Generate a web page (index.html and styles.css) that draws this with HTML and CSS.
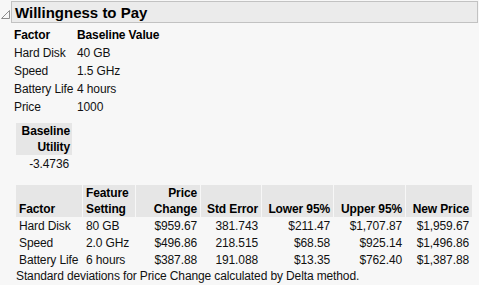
FILE: index.html
```html
<!DOCTYPE html>
<html>
<head>
<meta charset="utf-8">
<link rel="stylesheet" href="styles.css">
</head>
<body>
<div class="report">
  <div class="outline-head">
    <svg class="disclosure" width="9" height="9" viewBox="0 0 9 9"><path d="M8.5 0.5 L8.5 8.5 L0.5 8.5 Z" fill="#f7f7f7" stroke="#8c8c8c" stroke-width="1"/></svg>
    <div class="title-bar">Willingness to Pay</div>
  </div>
  <div class="content">
    <table class="baseline">
      <thead><tr><th class="c1">Factor</th><th>Baseline Value</th></tr></thead>
      <tbody>
        <tr><td class="c1">Hard Disk</td><td>40 GB</td></tr>
        <tr><td class="c1">Speed</td><td>1.5 GHz</td></tr>
        <tr><td class="c1">Battery Life</td><td>4 hours</td></tr>
        <tr><td class="c1">Price</td><td>1000</td></tr>
      </tbody>
    </table>
    <table class="utility">
      <thead><tr><th>Baseline<br>Utility</th></tr></thead>
      <tbody><tr><td>-3.4736</td></tr></tbody>
    </table>
    <table class="wtp">
      <thead>
        <tr>
          <th class="l w1">Factor</th>
          <th class="l w2">Feature<br>Setting</th>
          <th class="w3">Price<br>Change</th>
          <th class="w4">Std Error</th>
          <th class="w5">Lower 95%</th>
          <th class="w6">Upper 95%</th>
          <th class="w7">New Price</th>
        </tr>
      </thead>
      <tbody>
        <tr><td class="l">Hard Disk</td><td class="l">80 GB</td><td>$959.67</td><td>381.743</td><td>$211.47</td><td>$1,707.87</td><td>$1,959.67</td></tr>
        <tr><td class="l">Speed</td><td class="l">2.0 GHz</td><td>$496.86</td><td>218.515</td><td>$68.58</td><td>$925.14</td><td>$1,496.86</td></tr>
        <tr><td class="l">Battery Life</td><td class="l">6 hours</td><td>$387.88</td><td>191.088</td><td>$13.35</td><td>$762.40</td><td>$1,387.88</td></tr>
      </tbody>
    </table>
    <div class="note">Standard deviations for Price Change calculated by Delta method.</div>
  </div>
</div>
</body>
</html>
```
FILE: styles.css
```css
html, body {
  margin: 0;
  padding: 0;
  background: #f7f7f7;
}
body {
  font-family: "Liberation Sans", Arial, sans-serif;
  font-size: 12px;
  letter-spacing: -0.12px;
  color: #111;
}
.report {
  width: 479px;
  height: 285px;
  overflow: hidden;
}
.outline-head {
  display: flex;
  align-items: flex-start;
  padding-top: 1px;
}
.disclosure {
  margin: 9px 1px 0 1px;
  flex: none;
}
.title-bar {
  flex: 1;
  height: 20px;
  line-height: 21px;
  margin-right: 1px;
  border: 1px solid #c2c2c2;
  background: #ebebeb;
  font-weight: bold;
  font-size: 15px;
  letter-spacing: 0;
  padding-left: 3px;
  color: #000;
}
.content {
  padding-left: 14px;
}
table {
  border-collapse: separate;
  border-spacing: 0;
}
th, td {
  padding: 0;
  white-space: nowrap;
}
.baseline {
  margin-top: 3px;
}
.baseline th, .baseline td {
  height: 18px;
  text-align: left;
}
.baseline th {
  font-weight: bold;
  color: #000;
}
.baseline .c1 {
  width: 60px;
  padding-right: 3px;
}
.utility {
  margin: 7px 0 0 2px;
}
.utility th {
  width: 52px;
  background: #e6e6e6;
  text-align: right;
  line-height: 16px;
  padding: 0 2px;
  font-weight: bold;
  color: #000;
}
.utility td {
  text-align: right;
  padding-right: 3px;
  height: 17px;
}
.wtp {
  margin: 13px 0 0 1px;
  border-spacing: 1px 0;
}
.wtp th {
  background: #e6e6e6;
  font-weight: bold;
  line-height: 16px;
  vertical-align: bottom;
  text-align: right;
  padding: 0 3px;
  color: #000;
}
.wtp td {
  height: 17px;
  text-align: right;
  padding: 0 3px;
}
.wtp .l {
  text-align: left;
}
.wtp .w1 { width: 60px; }
.wtp .w2 { width: 46px; }
.wtp .w3 { width: 58px; }
.wtp .w4 { width: 54px; }
.wtp .w5 { width: 65px; }
.wtp .w6 { width: 65px; }
.wtp .w7 { width: 60px; }
.note {
  line-height: 17px;
  margin-left: 2px;
}
```
